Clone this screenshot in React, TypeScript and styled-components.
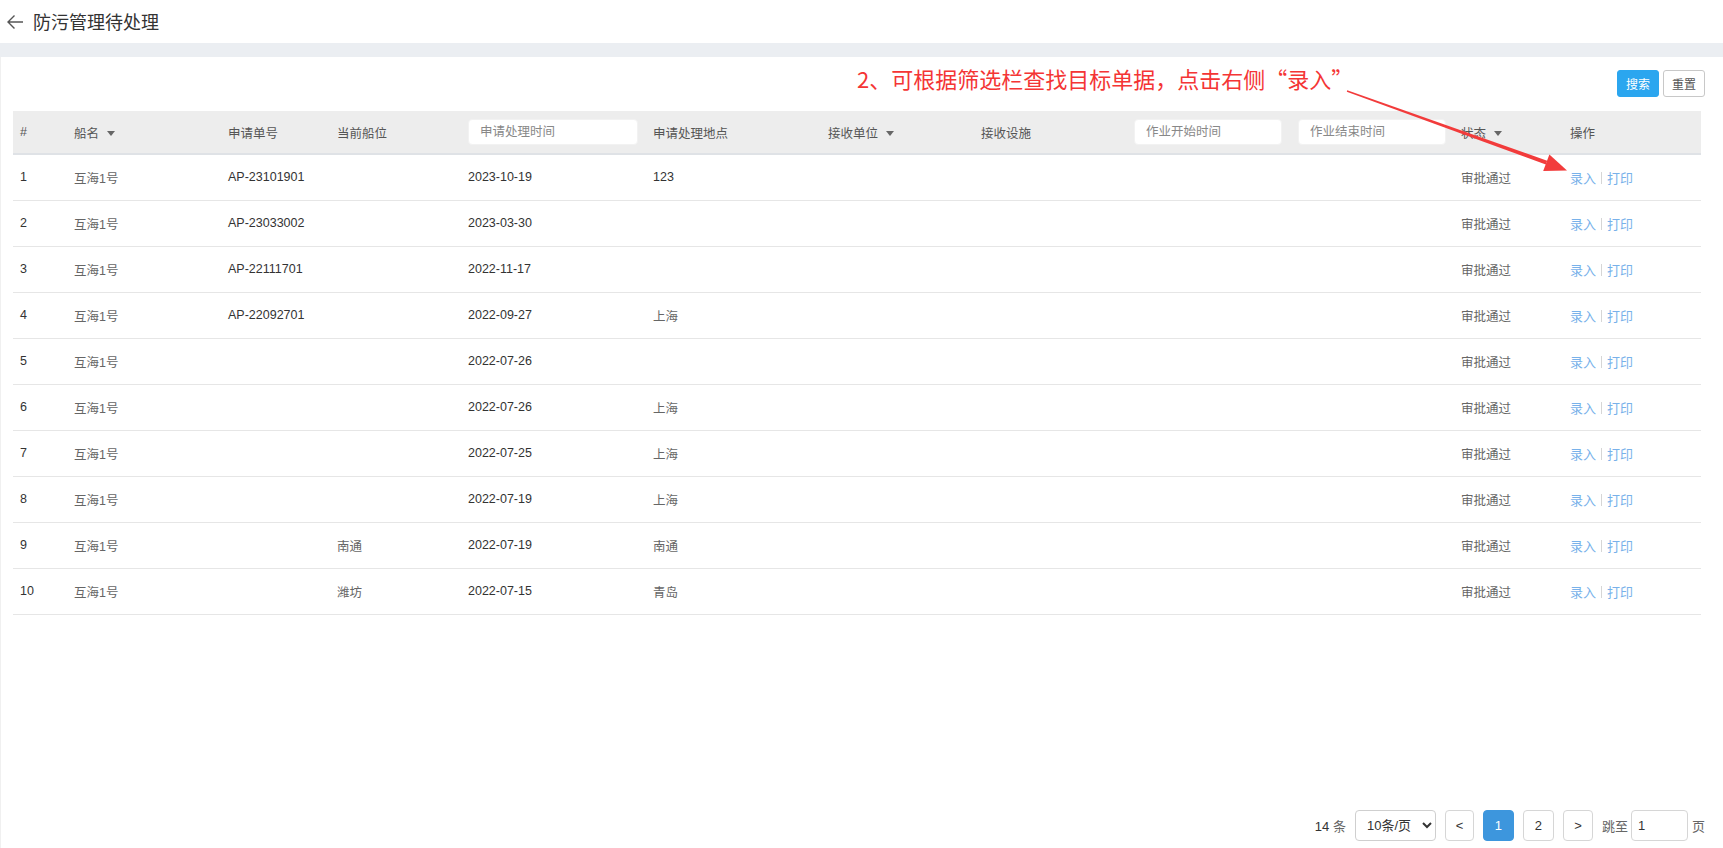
import React from "react";
import styled, { createGlobalStyle } from "styled-components";

const GlobalStyle = createGlobalStyle`
  html, body { margin: 0; padding: 0; background: #fff; }
  body { font-family: "Liberation Sans", "Noto Sans CJK SC", sans-serif; }
  * { box-sizing: border-box; }
`;

const Page = styled.div`
  position: relative;
  width: 1723px;
  height: 848px;
  display: flex;
  flex-direction: column;
  overflow: hidden;
`;

const TopBar = styled.div`
  height: 43px;
  display: flex;
  align-items: center;
  padding-left: 6px;
  gap: 9px;
  background: #fff;
`;

const BackIcon = styled.svg`
  width: 18px;
  height: 18px;
  display: block;
`;

const Title = styled.div`
  font-size: 18px;
  color: #333;
  font-family: "Noto Sans CJK SC", sans-serif;
  line-height: 1;
  margin-top: -1px;
`;

const Band = styled.div`
  height: 14px;
  background: #ebeef2;
`;

const Panel = styled.div`
  flex: 1;
  display: flex;
  flex-direction: column;
  background: #fff;
  border-left: 1px solid #f0f0f0;
  padding: 13px 18px 7px 12px;
`;

const Toolbar = styled.div`
  display: flex;
  justify-content: flex-end;
  gap: 4px;
  height: 27px;
`;

const Btn = styled.button<{ $primary?: boolean }>`
  width: 42px;
  height: 27px;
  border-radius: 3px;
  font-size: 12px;
  font-family: "Noto Sans CJK SC", sans-serif;
  padding: 0;
  cursor: pointer;
  border: 1px solid ${(p) => (p.$primary ? "#2ba6ef" : "#c8c8c8")};
  background: ${(p) => (p.$primary ? "#2ba6ef" : "#fff")};
  color: ${(p) => (p.$primary ? "#fff" : "#555")};
`;

const TableWrap = styled.div`
  margin-top: 14px;
  margin-right: 4px;
`;

const Table = styled.table`
  width: 100%;
  table-layout: fixed;
  border-collapse: collapse;
  font-size: 12.5px;
`;

const Col = styled.col<{ $w: number }>`
  width: ${(p) => p.$w}px;
`;

const HeadRow = styled.tr`
  background: #ededed;
  border-bottom: 2px solid #dfe2e6;
`;

const HeadCell = styled.th`
  height: 43px;
  padding: 0 0 0 7px;
  text-align: left;
  font-weight: normal;
  color: #555;
  white-space: nowrap;
  font-family: "Liberation Sans", "Noto Sans CJK SC", sans-serif;
`;

const SortMark = styled.span`
  display: inline-block;
  width: 0;
  height: 0;
  margin-left: 8px;
  vertical-align: middle;
  border-left: 4px solid transparent;
  border-right: 4px solid transparent;
  border-top: 5px solid #666;
  position: relative;
  top: -1px;
`;

const FilterInput = styled.input<{ $w: number }>`
  width: ${(p) => p.$w}px;
  height: 26px;
  border: 1px solid #f2f2f2;
  border-radius: 4px;
  background: #fff;
  padding: 0 11px;
  font-size: 12.5px;
  font-family: "Liberation Sans", "Noto Sans CJK SC", sans-serif;
  color: #333;
  outline: none;
  display: block;
  &::placeholder { color: #888; }
`;

const Row = styled.tr`
  border-bottom: 1px solid #e6e6e6;
`;

const Cell = styled.td<{ $tone?: "dark" | "mid" }>`
  height: 46px;
  padding: 0 0 0 7px;
  color: ${(p) => (p.$tone === "mid" ? "#666" : "#333")};
  white-space: nowrap;
`;

const Link = styled.a`
  color: #78b1ea;
  font-size: 13px;
  text-decoration: none;
  cursor: pointer;
`;

const Sep = styled.span`
  display: inline-block;
  width: 1px;
  height: 12px;
  background: #d6d6d6;
  margin: 0 5px;
  vertical-align: -1px;
`;

const Spacer = styled.div`
  flex: 1;
`;

const Pager = styled.div`
  display: flex;
  justify-content: flex-end;
  align-items: center;
  gap: 9px;
  height: 31px;
  font-size: 13px;
  color: #555;
`;

const Total = styled.span`
  color: #333;
`;

const TotalUnit = styled.span`
  color: #666;
`;

const PageSelect = styled.select`
  width: 81px;
  height: 31px;
  border: 1px solid #cfcfcf;
  border-radius: 4px;
  background: #fff;
  font-size: 13px;
  color: #333;
  padding-left: 7px;
  font-family: "Liberation Sans", "Noto Sans CJK SC", sans-serif;
`;

const PageBtn = styled.button<{ $active?: boolean; $w?: number }>`
  width: ${(p) => p.$w ?? 31}px;
  height: 31px;
  padding: 0;
  border-radius: 4px;
  font-size: 13px;
  font-family: "Liberation Sans", sans-serif;
  border: 1px solid ${(p) => (p.$active ? "#3d96dd" : "#d6d6d6")};
  background: ${(p) => (p.$active ? "#3d96dd" : "#fff")};
  color: ${(p) => (p.$active ? "#fff" : "#333")};
  cursor: pointer;
`;

const Jump = styled.div`
  display: flex;
  align-items: center;
  gap: 3px;
  color: #666;
`;

const JumpInput = styled.input`
  width: 57px;
  height: 31px;
  border: 1px solid #d6d6d6;
  border-radius: 4px;
  padding: 0 6px;
  font-size: 13px;
  color: #333;
  font-family: "Liberation Sans", sans-serif;
  margin-right: 1px;
`;

const Note = styled.div`
  position: absolute;
  left: 857px;
  top: 63px;
  font-size: 22px;
  line-height: 30px;
  color: #f43535;
  font-family: "Noto Sans CJK SC", sans-serif;
  white-space: nowrap;
`;

const Overlay = styled.svg`
  position: absolute;
  left: 0;
  top: 0;
  width: 1723px;
  height: 848px;
  pointer-events: none;
`;

type RowData = {
  no: number;
  ship: string;
  code: string;
  pos: string;
  date: string;
  place: string;
};

const rows: RowData[] = [
  { no: 1, ship: "互海1号", code: "AP-23101901", pos: "", date: "2023-10-19", place: "123" },
  { no: 2, ship: "互海1号", code: "AP-23033002", pos: "", date: "2023-03-30", place: "" },
  { no: 3, ship: "互海1号", code: "AP-22111701", pos: "", date: "2022-11-17", place: "" },
  { no: 4, ship: "互海1号", code: "AP-22092701", pos: "", date: "2022-09-27", place: "上海" },
  { no: 5, ship: "互海1号", code: "", pos: "", date: "2022-07-26", place: "" },
  { no: 6, ship: "互海1号", code: "", pos: "", date: "2022-07-26", place: "上海" },
  { no: 7, ship: "互海1号", code: "", pos: "", date: "2022-07-25", place: "上海" },
  { no: 8, ship: "互海1号", code: "", pos: "", date: "2022-07-19", place: "上海" },
  { no: 9, ship: "互海1号", code: "", pos: "南通", date: "2022-07-19", place: "南通" },
  { no: 10, ship: "互海1号", code: "", pos: "潍坊", date: "2022-07-15", place: "青岛" },
];

const widths = [54, 154, 109, 131, 185, 175, 153, 153, 164, 163, 109, 138];

export default function App() {
  return (
    <>
      <GlobalStyle />
      <Page>
        <TopBar>
          <BackIcon viewBox="0 0 18 18" fill="none">
            <path d="M17 9H2M8.5 2.5L2 9l6.5 6.5" stroke="#555" strokeWidth="1.4" />
          </BackIcon>
          <Title>防污管理待处理</Title>
        </TopBar>
        <Band />
        <Panel>
          <Toolbar>
            <Btn $primary>搜索</Btn>
            <Btn>重置</Btn>
          </Toolbar>
          <TableWrap>
            <Table>
              <colgroup>
                {widths.map((w, i) => (
                  <Col key={i} $w={w} />
                ))}
              </colgroup>
              <thead>
                <HeadRow>
                  <HeadCell>#</HeadCell>
                  <HeadCell>
                    船名<SortMark />
                  </HeadCell>
                  <HeadCell>申请单号</HeadCell>
                  <HeadCell>当前船位</HeadCell>
                  <HeadCell>
                    <FilterInput $w={170} placeholder="申请处理时间" />
                  </HeadCell>
                  <HeadCell>申请处理地点</HeadCell>
                  <HeadCell>
                    接收单位<SortMark />
                  </HeadCell>
                  <HeadCell>接收设施</HeadCell>
                  <HeadCell>
                    <FilterInput $w={148} placeholder="作业开始时间" />
                  </HeadCell>
                  <HeadCell>
                    <FilterInput $w={148} placeholder="作业结束时间" />
                  </HeadCell>
                  <HeadCell>
                    状态<SortMark />
                  </HeadCell>
                  <HeadCell>操作</HeadCell>
                </HeadRow>
              </thead>
              <tbody>
                {rows.map((r) => (
                  <Row key={r.no}>
                    <Cell>{r.no}</Cell>
                    <Cell $tone="mid">{r.ship}</Cell>
                    <Cell>{r.code}</Cell>
                    <Cell $tone="mid">{r.pos}</Cell>
                    <Cell>{r.date}</Cell>
                    <Cell $tone={/\d/.test(r.place) ? "dark" : "mid"}>{r.place}</Cell>
                    <Cell />
                    <Cell />
                    <Cell />
                    <Cell />
                    <Cell $tone="mid">审批通过</Cell>
                    <Cell>
                      <Link>录入</Link>
                      <Sep />
                      <Link>打印</Link>
                    </Cell>
                  </Row>
                ))}
              </tbody>
            </Table>
          </TableWrap>
          <Spacer />
          <Pager>
            <span>
              <Total>14</Total> <TotalUnit>条</TotalUnit>
            </span>
            <PageSelect defaultValue="10">
              <option value="10">10条/页</option>
              <option value="20">20条/页</option>
            </PageSelect>
            <PageBtn $w={29}>&lt;</PageBtn>
            <PageBtn $active>1</PageBtn>
            <PageBtn>2</PageBtn>
            <PageBtn $w={30}>&gt;</PageBtn>
            <Jump>
              <span>跳至</span>
              <JumpInput defaultValue="1" />
              <span>页</span>
            </Jump>
          </Pager>
        </Panel>
        <Note>2、可根据筛选栏查找目标单据，点击右侧“录入”</Note>
        <Overlay viewBox="0 0 1723 848">
          <polygon
            points="1346.8,91.8 1347.2,90.2 1547.2,160.8 1545.8,164.6"
            fill="#f23b3b"
          />
          <polygon points="1567,170.5 1543.2,171 1549.4,154.4" fill="#f23b3b" />
        </Overlay>
      </Page>
    </>
  );
}
